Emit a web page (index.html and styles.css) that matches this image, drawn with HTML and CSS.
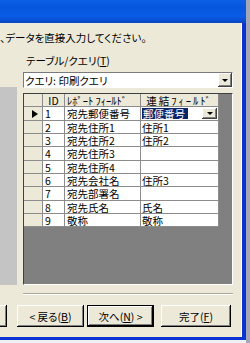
FILE: index.html
```html
<!DOCTYPE html>
<html lang="ja">
<head>
    <meta charset="UTF-8">
    <title>差し込み印刷ウィザード</title>
    <link rel="stylesheet" href="styles.css">
</head>
<body>
    <div class="screen">
        <div class="window">
            <div class="titlebar"></div>
            <div class="frame">
                <p class="intro">、データを直接入力してください。</p>

                <div class="middle">
                    <div class="picture"></div>
                    <div class="main">
                        <div class="field-label">テーブル/クエリ(<u>T</u>)</div>
                        <div class="combo">
                            <span class="combo-text">クエリ: 印刷クエリ</span>
                            <span class="drop-btn"><i class="arrow"></i></span>
                        </div>

                        <div class="datasheet">
                            <div class="sheet">
                                <div class="cell head"></div>
                                <div class="cell head center">ID</div>
                                <div class="cell head">ﾚﾎﾟｰﾄ ﾌｨｰﾙﾄﾞ</div>
                                <div class="cell head center wide">連結ﾌｨｰﾙﾄﾞ</div>

                                <div class="cell sel"><i class="pointer"></i></div>
                                <div class="cell">1</div>
                                <div class="cell">宛先郵便番号</div>
                                <div class="cell link-edit">
                                    <span class="picked">郵便番号</span>
                                    <span class="drop-btn small"><i class="arrow"></i></span>
                                </div>

                                <div class="cell sel"></div>
                                <div class="cell">2</div>
                                <div class="cell">宛先住所1</div>
                                <div class="cell link">住所1</div>

                                <div class="cell sel"></div>
                                <div class="cell">3</div>
                                <div class="cell">宛先住所2</div>
                                <div class="cell link">住所2</div>

                                <div class="cell sel"></div>
                                <div class="cell">4</div>
                                <div class="cell">宛先住所3</div>
                                <div class="cell link"></div>

                                <div class="cell sel"></div>
                                <div class="cell">5</div>
                                <div class="cell">宛先住所4</div>
                                <div class="cell link"></div>

                                <div class="cell sel"></div>
                                <div class="cell">6</div>
                                <div class="cell">宛先会社名</div>
                                <div class="cell link">住所3</div>

                                <div class="cell sel"></div>
                                <div class="cell">7</div>
                                <div class="cell">宛先部署名</div>
                                <div class="cell link"></div>

                                <div class="cell sel"></div>
                                <div class="cell">8</div>
                                <div class="cell">宛先氏名</div>
                                <div class="cell link">氏名</div>

                                <div class="cell sel"></div>
                                <div class="cell">9</div>
                                <div class="cell">敬称</div>
                                <div class="cell link">敬称</div>
                            </div>
                        </div>
                    </div>
                </div>

                <div class="separator"></div>

                <div class="buttons">
                    <button class="btn btn-cut" aria-label="キャンセル"></button>
                    <button class="btn btn-back">&lt; 戻る(<u>B</u>)</button>
                    <button class="btn btn-next">次へ(<u>N</u>) &gt;</button>
                    <button class="btn btn-finish">完了(<u>F</u>)</button>
                </div>
            </div>
        </div>
        <div class="desk"></div>
    </div>
</body>
</html>
```

FILE: styles.css
```css
body {
    margin: 0;
    background: #eef0f6;
    font-family: "Noto Sans CJK JP", "Liberation Sans", sans-serif;
    font-size: 10.5px;
    font-feature-settings: "palt";
    color: #000;
}
u {
    text-decoration: underline;
    text-underline-offset: 1px;
}
.screen {
    display: flex;
    height: 343px;
}
.window {
    width: 246px;
    height: 340px;
    display: flex;
    flex-direction: column;
    flex: none;
}
.desk {
    flex: 1;
    background: #a4a8b4;
}
.titlebar {
    height: 23px;
    flex: none;
    background: linear-gradient(#0b60e4, #0756dd 30%, #0a5ce6 70%, #0846c4);
}
.frame {
    flex: 1;
    background: #ece9d8;
    border-right: 4px solid #0b33d2;
    border-bottom: 3px solid #0b33d2;
    box-shadow: inset -1px 0 #fff;
    padding-top: 8px;
}
.intro {
    margin: 0;
    line-height: 13px;
    white-space: nowrap;
}
.middle {
    display: flex;
    align-items: flex-end;
    margin-top: 10px;
}
.picture {
    width: 17px;
    height: 198px;
    flex: none;
    background: #c4c4c4;
}
.main {
    margin-left: 6px;
    width: 210px;
}
.field-label {
    line-height: 13px;
    padding-left: 3px;
}
.combo {
    margin-top: 5px;
    height: 16px;
    box-sizing: border-box;
    background: #fff;
    border: 1px solid;
    border-color: #7a7a7a #fff #fff #7a7a7a;
    display: flex;
    align-items: center;
}
.combo-text {
    padding-left: 1px;
    line-height: 13px;
}
.drop-btn {
    margin-left: auto;
    width: 14px;
    height: 14px;
    flex: none;
    background: #ece9d8;
    box-shadow: inset -1px -1px #404040, inset 1px 1px #fff, inset -2px -2px #808080;
    display: flex;
    align-items: center;
    justify-content: center;
}
.drop-btn.small {
    width: 15px;
    height: 11px;
    margin-right: 1px;
}
.arrow {
    border-top: 3px solid #000;
    border-left: 3px solid transparent;
    border-right: 3px solid transparent;
}
.datasheet {
    margin-top: 5px;
    height: 192px;
    box-sizing: border-box;
    background: #808080;
    border: 1px solid;
    border-color: #404040 #fff #fff #404040;
}
.sheet {
    display: grid;
    grid-template-columns: 19px 22px 76px 78px;
    grid-auto-rows: 13.35px;
}
.cell {
    box-sizing: border-box;
    border-right: 1px solid #8c8c8c;
    border-bottom: 1px solid #8c8c8c;
    background: #fff;
    padding: 1px 0 0 2px;
    line-height: 12px;
    white-space: nowrap;
    overflow: hidden;
}
.cell.head,
.cell.sel {
    background: #ece9d8;
}
.cell.center {
    text-align: center;
    padding-left: 0;
}
.cell.wide {
    letter-spacing: 2px;
}
.cell.link {
    padding-left: 1px;
}
.cell.sel {
    display: flex;
    align-items: center;
    padding: 0 0 0 8px;
}
.pointer {
    border-left: 6px solid #000;
    border-top: 4.5px solid transparent;
    border-bottom: 4.5px solid transparent;
}
.cell.link-edit {
    display: flex;
    align-items: center;
    padding: 0 0 0 1px;
}
.picked {
    background: #0a246a;
    color: #fff;
    line-height: 11px;
    padding: 0 3px 0 1px;
}
.separator {
    margin: 8px 0 0 23px;
    width: 210px;
    border-top: 1px solid #aca899;
    border-bottom: 1px solid #fff;
}
.buttons {
    display: flex;
    margin-top: 10px;
    height: 22px;
}
.btn {
    font: inherit;
    color: #000;
    padding: 0;
    flex: none;
    height: 22px;
    border: none;
    background: #ece9d8;
    box-shadow: inset -1px -1px #000, inset 1px 1px #fff, inset -2px -2px #808080;
    white-space: nowrap;
    overflow: hidden;
}
.btn-cut {
    width: 68px;
    margin-left: -61px;
}
.btn-back {
    width: 67px;
    margin-left: 10px;
}
.btn-next {
    width: 67px;
    margin-left: 3px;
    border: 1px solid #000;
}
.btn-finish {
    width: 70px;
    margin-left: 7px;
}
```
